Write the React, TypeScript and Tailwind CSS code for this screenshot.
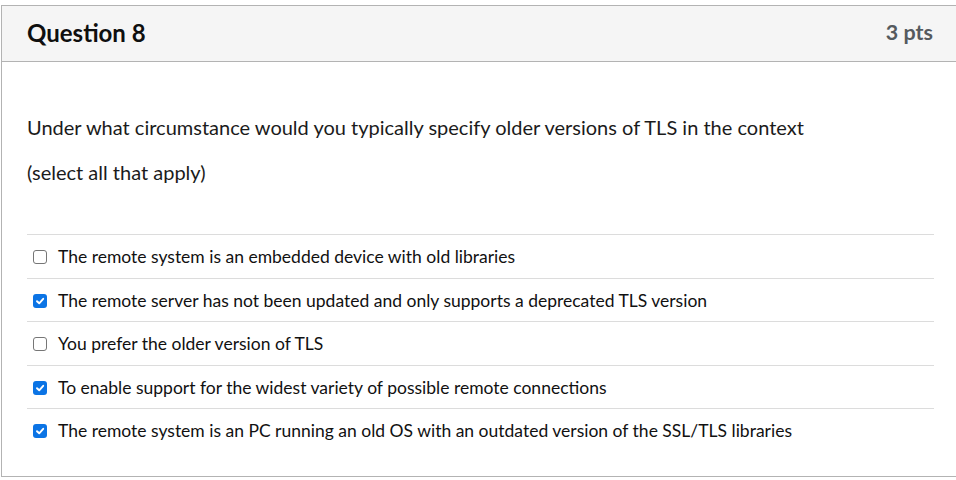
import React from 'react';

const ANSWERS = [
  { id: 'a1', text: 'The remote system is an embedded device with old libraries', checked: false },
  { id: 'a2', text: 'The remote server has not been updated and only supports a deprecated TLS version', checked: true },
  { id: 'a3', text: 'You prefer the older version of TLS', checked: false },
  { id: 'a4', text: 'To enable support for the widest variety of possible remote connections', checked: true },
  { id: 'a5', text: 'The remote system is an PC running an old OS with an outdated version of the SSL/TLS libraries', checked: true },
];

const Box = ({ checked }: { checked: boolean }) =>
  checked ? (
    <span className="w-[14px] h-[14px] rounded-[3px] bg-[#0b74e5] flex items-center justify-center shrink-0">
      <svg width="10" height="10" viewBox="0 0 10 10">
        <path d="M2 5.2 L4.2 7.3 L8.2 2.8" fill="none" stroke="#fff" strokeWidth="1.9" strokeLinecap="round" strokeLinejoin="round" />
      </svg>
    </span>
  ) : (
    <span className="w-[14px] h-[14px] rounded-[3px] border border-[#767676] bg-white shrink-0" />
  );

export default function App() {
  return (
    <div className="w-[956px] h-[480px] overflow-hidden bg-white pt-[5px] pl-[1px] font-['Lato','Liberation_Sans',sans-serif] text-[#1b1b1b]">
      <div className="w-[959px] h-[472px] border border-[#b3b3b3]">
        {/* header */}
        <div className="h-[56px] bg-[#f5f5f5] border-b border-[#b3b3b3] flex items-center justify-between pl-[25px] pr-[26px]">
          <h2 className="text-[24px] font-bold text-[#0f0f0f] -mt-[2px]">Question 8</h2>
          <span className="text-[21.5px] font-bold text-[#555a5e] -mt-[3px]">3 pts</span>
        </div>

        {/* body */}
        <div className="px-[25px] pt-[53px]">
          <p className="text-[20px] leading-[24px]">
            Under what circumstance would you typically specify older versions of TLS in the context
          </p>
          <p className="text-[20px] leading-[24px] mt-[21px]">(select all that apply)</p>

          <div className="mt-[50px]">
            {ANSWERS.map((a) => (
              <div key={a.id} className="h-[43.5px] border-t border-[#dcdcdc] flex items-center gap-[11px] pl-[6px] pt-[2px]">
                <Box checked={a.checked} />
                <span className="text-[17.5px] text-[#111]">{a.text}</span>
              </div>
            ))}
          </div>
        </div>
      </div>
    </div>
  );
}
